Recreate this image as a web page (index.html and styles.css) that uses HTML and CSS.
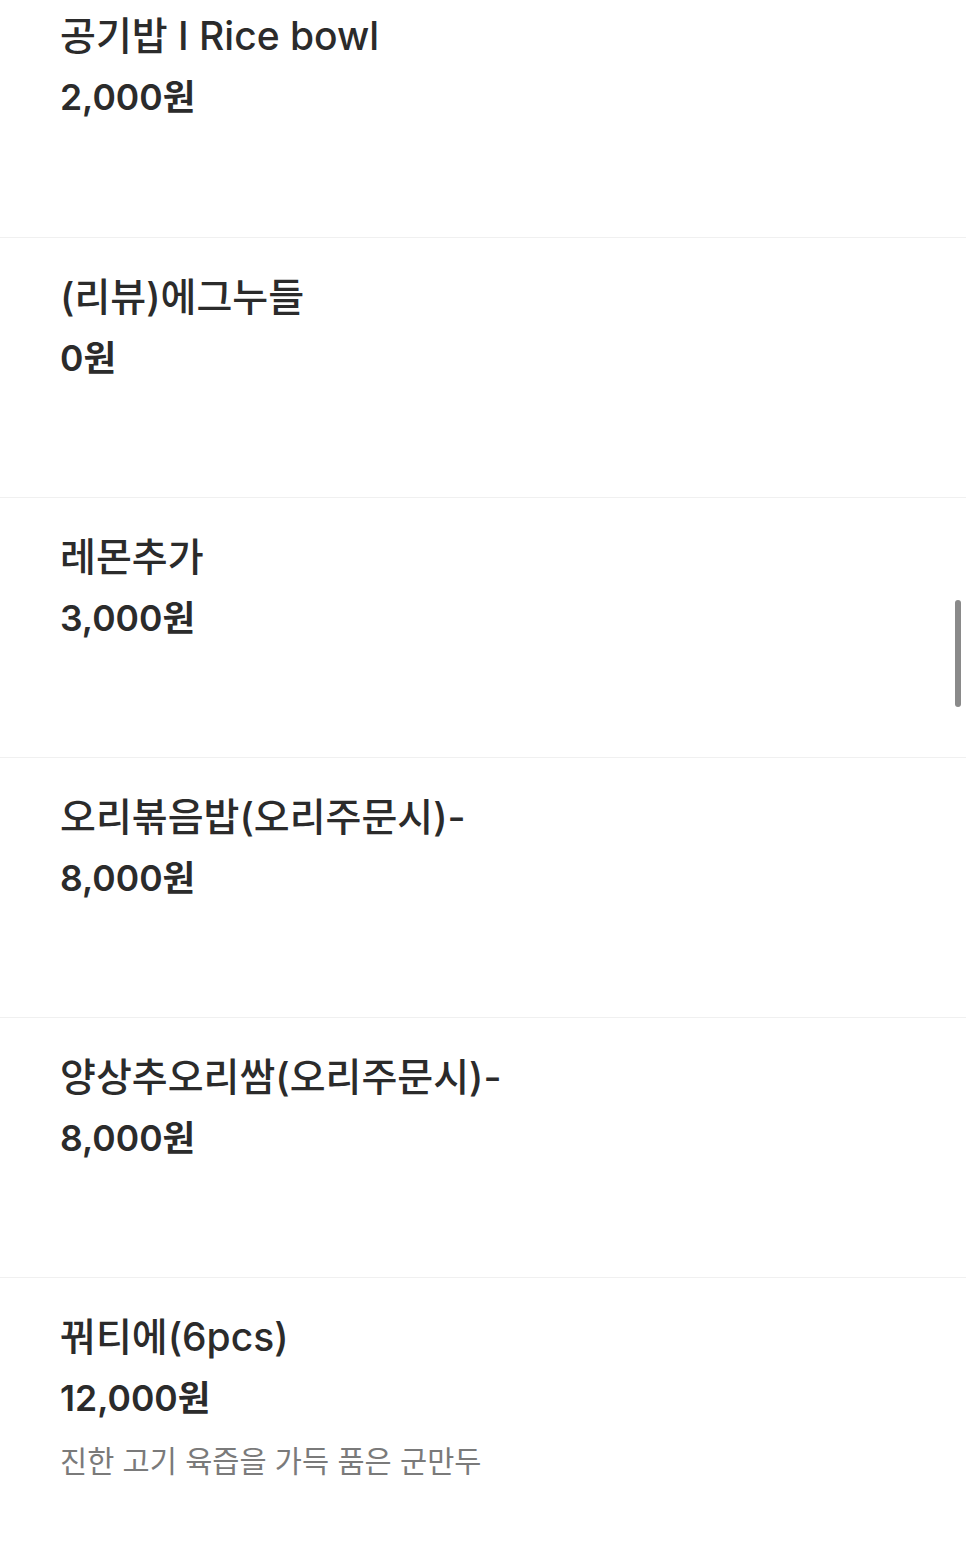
FILE: index.html
```html
<!DOCTYPE html>
<html lang="ko">
<head>
    <meta charset="utf-8">
    <title>메뉴</title>
    <link rel="stylesheet" href="styles.css">
</head>
<body>
    <ul class="menu-list">
        <li class="menu-item">
            <div class="menu-name">공기밥 I Rice bowl</div>
            <div class="menu-price">2,000원</div>
        </li>
        <li class="menu-item">
            <div class="menu-name">(리뷰)에그누들</div>
            <div class="menu-price">0원</div>
        </li>
        <li class="menu-item">
            <div class="menu-name">레몬추가</div>
            <div class="menu-price">3,000원</div>
        </li>
        <li class="menu-item">
            <div class="menu-name">오리볶음밥(오리주문시)-</div>
            <div class="menu-price">8,000원</div>
        </li>
        <li class="menu-item">
            <div class="menu-name">양상추오리쌈(오리주문시)-</div>
            <div class="menu-price">8,000원</div>
        </li>
        <li class="menu-item">
            <div class="menu-name">꿔티에(6pcs)</div>
            <div class="menu-price">12,000원</div>
            <div class="menu-desc">진한 고기 육즙을 가득 품은 군만두</div>
        </li>
    </ul>
    <div class="scroll-thumb"></div>
</body>
</html>
```

FILE: styles.css
```css
body {
    margin: 0;
    padding: 0;
    background: #fff;
    font-family: Inter, "Noto Sans CJK KR", sans-serif;
    color: #2b2b2b;
    overflow: hidden;
}
.menu-list {
    list-style: none;
    margin: -23px 0 0 0;
    padding: 0;
}
.menu-item {
    box-sizing: border-box;
    height: 260px;
    padding: 34px 60px 0;
    border-top: 1px solid #f0f0f0;
}
.menu-item:first-child {
    border-top: none;
}
.menu-name {
    font-size: 39px;
    font-weight: 500;
    line-height: 50px;
    letter-spacing: 0;
}
.menu-price {
    margin-top: 12px;
    font-size: 35.5px;
    font-weight: 600;
    line-height: 50px;
}
.menu-desc {
    margin-top: 17px;
    font-size: 29.5px;
    line-height: 40px;
    color: #7a7a7a;
}
.scroll-thumb {
    position: fixed;
    top: 600px;
    right: 5px;
    width: 6px;
    height: 107px;
    border-radius: 3px;
    background: #8a8a8a;
}
```
